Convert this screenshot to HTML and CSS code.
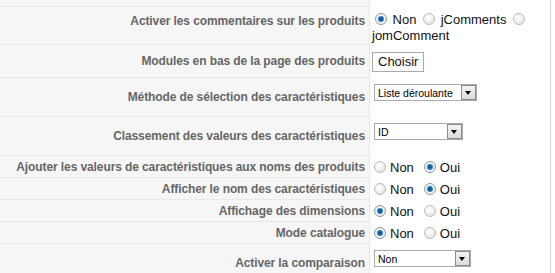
FILE: index.html
```html
<!DOCTYPE html>
<html>
    <head>
        <meta charset="utf-8">
        <title>Paramètres des produits</title>
        <link rel="stylesheet" href="styles.css">
    </head>
    <body>
        <div class="admintable">
            <div class="row row_cut">
                <div class="key"></div>
                <div class="value"></div>
            </div>

            <div class="row row_tall">
                <div class="key key_top">Activer les commentaires sur les produits</div>
                <div class="value value_wrap"><input type="radio" name="comments" checked> Non <input type="radio" name="comments"> jComments <input type="radio" name="comments"> jomComment</div>
            </div>

            <div class="row row_button">
                <div class="key">Modules en bas de la page des produits</div>
                <div class="value">
                    <button class="button">Choisir</button>
                </div>
            </div>

            <div class="row row_select">
                <div class="key">Méthode de sélection des caractéristiques</div>
                <div class="value">
                    <div class="select" style="width:103px">
                        <span class="select_text">Liste déroulante</span>
                        <span class="select_arrow"></span>
                    </div>
                </div>
            </div>

            <div class="row row_select">
                <div class="key">Classement des valeurs des caractéristiques</div>
                <div class="value">
                    <div class="select" style="width:89px">
                        <span class="select_text">ID</span>
                        <span class="select_arrow"></span>
                    </div>
                </div>
            </div>

            <div class="row">
                <div class="key">Ajouter les valeurs de caractéristiques aux noms des produits</div>
                <div class="value">
                    <label class="opt"><input type="radio" name="addvalues"> Non</label>
                    <label class="opt"><input type="radio" name="addvalues" checked> Oui</label>
                </div>
            </div>

            <div class="row">
                <div class="key">Afficher le nom des caractéristiques</div>
                <div class="value">
                    <label class="opt"><input type="radio" name="shownames"> Non</label>
                    <label class="opt"><input type="radio" name="shownames" checked> Oui</label>
                </div>
            </div>

            <div class="row">
                <div class="key">Affichage des dimensions</div>
                <div class="value">
                    <label class="opt"><input type="radio" name="dimensions" checked> Non</label>
                    <label class="opt"><input type="radio" name="dimensions"> Oui</label>
                </div>
            </div>

            <div class="row">
                <div class="key">Mode catalogue</div>
                <div class="value">
                    <label class="opt"><input type="radio" name="catalog" checked> Non</label>
                    <label class="opt"><input type="radio" name="catalog"> Oui</label>
                </div>
            </div>

            <div class="row row_select">
                <div class="key">Activer la comparaison</div>
                <div class="value">
                    <div class="select" style="width:97px">
                        <span class="select_text">Non</span>
                        <span class="select_arrow"></span>
                    </div>
                </div>
            </div>
        </div>
    </body>
</html>
```

FILE: styles.css
```css
body {
    margin: 0;
    padding: 0;
    background: #ffffff;
    font-family: 'Liberation Sans', Arial, sans-serif;
    font-size: 13px;
    color: #111111;
}

.admintable {
    width: 550px;
    border-right: 1px solid #d8d8d8;
}

.row {
    display: grid;
    grid-template-columns: 370px 1fr;
    height: 22px;
}

.row_cut {
    height: 7px;
}

.row_tall {
    height: 38px;
}

.row_button {
    height: 33px;
}

.row_select {
    height: 39px;
}

.key {
    box-sizing: border-box;
    display: flex;
    align-items: center;
    justify-content: flex-end;
    padding-right: 4px;
    background: #f6f6f6;
    border-right: 1px solid #e9e9e9;
    border-bottom: 1px solid #e9e9e9;
    font-size: 12px;
    font-weight: bold;
    letter-spacing: -0.1px;
    color: #666666;
    white-space: nowrap;
}

.key_top {
    align-items: flex-start;
    padding-top: 7px;
}

.value {
    display: flex;
    align-items: center;
    padding-left: 4px;
}

.row_select .value {
    align-items: flex-start;
    padding-top: 6px;
}

.value_wrap {
    display: block;
    padding-left: 2px;
    padding-right: 0;
    padding-top: 5px;
    line-height: 16px;
}

.value_wrap input[type=radio] {
    margin: 0 2px 0 3px;
    vertical-align: -1px;
}

.value_wrap input[type=radio]:first-child {
    margin-left: 3px;
}

.opt {
    display: inline-flex;
    align-items: center;
    margin-right: 10px;
}

input[type=radio] {
    -webkit-appearance: none;
    appearance: none;
    box-sizing: border-box;
    width: 12px;
    height: 12px;
    margin: 0 4px 0 0;
    border-radius: 50%;
    border: 1px solid #bcbcbc;
    background: radial-gradient(circle at 40% 35%, #ffffff 0%, #f2f2f2 45%, #d9d9d9 100%);
}

input[type=radio]:checked {
    border-color: #8a9aa8;
    background: radial-gradient(circle at 50% 50%, #0b3f6e 0%, #1f6fb0 28%, #62a8dc 42%, #ffffff 52%, #eef0f2 70%, #c8ccd0 100%);
}

.button {
    box-sizing: border-box;
    height: 20px;
    padding: 0 5px;
    margin-left: -2px;
    border: 1px solid #a9a9a9;
    background: #ffffff;
    font-family: 'Liberation Sans', Arial, sans-serif;
    font-size: 13px;
    color: #111111;
}

.select {
    box-sizing: border-box;
    display: flex;
    align-items: center;
    height: 17px;
    border: 1px solid #a5acb2;
    background: #ffffff;
    font-size: 10.5px;
    color: #000000;
}

.select_text {
    flex: 1;
    padding-left: 3px;
    white-space: nowrap;
    overflow: hidden;
}

.select_arrow {
    box-sizing: border-box;
    position: relative;
    width: 15px;
    height: 15px;
    border: 1px solid #8c8c8c;
    background: linear-gradient(#f4f4f4, #dcdcdc);
}

.select_arrow:after {
    content: '';
    position: absolute;
    left: 3px;
    top: 5px;
    border-left: 3.5px solid transparent;
    border-right: 3.5px solid transparent;
    border-top: 4px solid #000000;
}
```
